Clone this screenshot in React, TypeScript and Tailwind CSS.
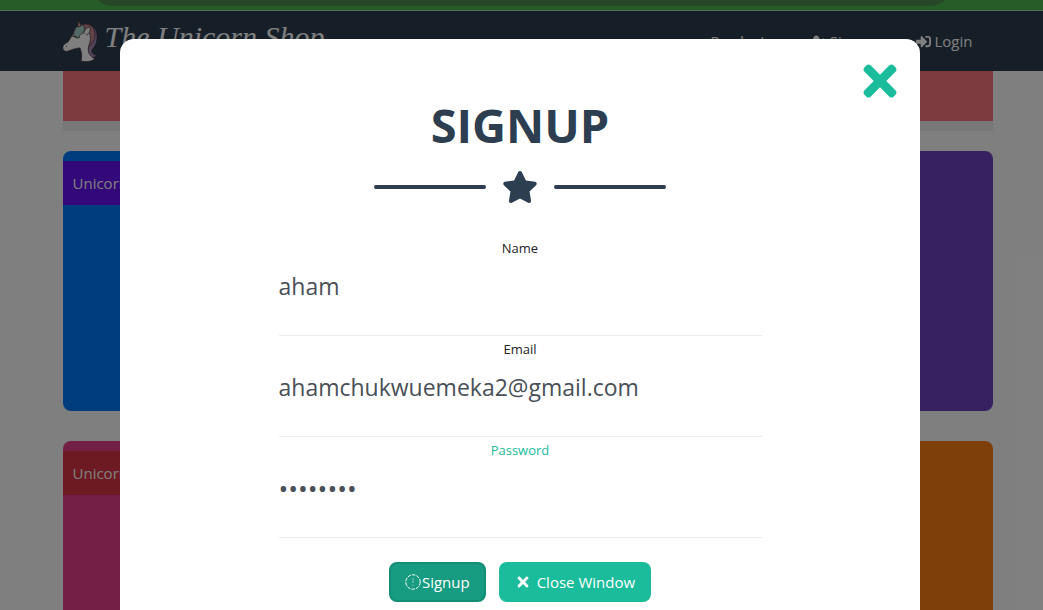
import { FaStar, FaTimes, FaSignInAlt, FaUserPlus } from "react-icons/fa";

function Unicorn() {
  return (
    <svg viewBox="0 0 36 42" className="h-[42px] w-9 shrink-0" aria-hidden="true" strokeLinejoin="round">
      <path d="M20 5C29 3 35 9 34 18c0 6-3 9-5 12-1 3 2 5 5 5-4 4-7 3-9 0L18 14z" fill="#a58bb5" stroke="#3b2a38" strokeWidth=".7" />
      <path d="M18 5c9-3 14 2 14 10 0 8-6 9-7 14-1 3 0 5 0 8-5-3-5-9-5-14z" fill="#c98893" stroke="#3b2a38" strokeWidth=".7" />
      <path d="M13 11C9 14 8 18 5 22c-4 2-6 4-5 7 1 3 4 3 8 1 3-1 6-2 9-2 2 5 2 9 1 13 5 1 9 1 14-2-6-3-8-8-6-14 2-5 2-10-1-14-4-4-8-3-12 0z" fill="#fff" stroke="#3b2a38" strokeWidth=".7" />
      <path d="M11 16c-1-4 1-9 5-11 4-1 7 2 5 6-1 3-5 3-5 7-2 0-4 0-5-2z" fill="#a6d3c8" stroke="#3b2a38" strokeWidth=".7" />
      <path d="M14.500 7 15.500 0l2.500 6z" fill="#dfa7a5" stroke="#3b2a38" strokeWidth=".7" />
      <path d="M21 14c0-4 3-7 6-7 1 4-1 7-4 8" fill="#fff" stroke="#3b2a38" strokeWidth=".7" />
      <path d="m9 16 5 1M3 26l1 1" fill="none" stroke="#3b2a38" strokeWidth=".8" />
    </svg>
  );
}

function DashedAlert() {
  return (
    <svg viewBox="0 0 16 16" className="size-4" fill="none" stroke="currentColor" aria-hidden="true">
      <circle cx="8" cy="8" r="7.2" strokeDasharray="3.6 1.05" strokeWidth="1" />
      <path d="M8 4v5M8 10.5v1.5" strokeWidth="1" opacity=".45" />
    </svg>
  );
}

function Product({ card, band }: { card: string; band: string }) {
  return (
    <article className={`h-[260px] rounded-lg pt-2.5 ${card}`}>
      {band && <h3 className={`px-2.5 py-2.5 text-[15px] leading-6 text-white ${band}`}>Unicorn</h3>}
    </article>
  );
}

type FieldProps = { id: string; label: string; type: string; value: string; tint?: string; size?: string };

function Field({ id, label, type, value, tint = "text-[#212529]", size = "text-[23px]" }: FieldProps) {
  return (
    <div className="flex h-[101px] flex-col border-b border-[#e9ecef]">
      <label htmlFor={id} className={`pt-1 text-center text-[13px] leading-[18px] ${tint}`}>{label}</label>
      <input id={id} type={type} defaultValue={value} className={`mt-[5px] h-12 w-full bg-transparent text-[#495057] outline-none ${size}`} />
    </div>
  );
}

export default function App() {
  return (
    <div className="relative h-screen overflow-hidden bg-white font-['Open_Sans','Noto_Sans',sans-serif]">
      <div className="h-2.5 overflow-hidden bg-[#4db950] px-[90px]">
        <div className="-mt-10 h-[46px] rounded-full bg-[#4c904f]" />
      </div>
      <header className="border-t border-[#a8dba9] bg-[#2c3e50] pl-3">
        <div className="mx-auto flex h-[60px] max-w-[930px] items-center text-white">
          <Unicorn />
          <span className="ml-1.5 pb-2 font-['Liberation_Serif',cursive] text-[30px] leading-10 whitespace-nowrap italic">The Unicorn Shop</span>
          <nav className="mr-5 ml-auto flex gap-[38px] text-[15px]">
            <a href="#products">Products</a>
            <a href="#signup" className="flex items-center gap-1"><FaUserPlus />Signup</a>
            <a href="#login" className="flex items-center gap-1"><FaSignInAlt />Login</a>
          </nav>
        </div>
      </header>
      <main className="pl-3">
        <div className="mx-auto max-w-[930px]">
          <div className="h-[60px] border-b-10 border-[#f0f0f0] bg-[#f8747e]" />
          <div className="mt-5 grid grid-cols-3 gap-[30px]">
            <Product card="bg-[#007bff]" band="bg-[#6610f2]" />
            <Product card="bg-[#28a745]" band="" />
            <Product card="bg-[#6f42c1]" band="" />
            <Product card="bg-[#e83e8c]" band="bg-[#dc3545]" />
            <Product card="bg-[#20c997]" band="" />
            <Product card="bg-[#fd7e14]" band="" />
          </div>
        </div>
      </main>

      <div className="absolute inset-0 overflow-hidden bg-black/50 pr-[3px]">
        <section role="dialog" aria-modal="true" aria-labelledby="signup-title" className="relative mx-auto mt-[39px] min-h-full max-w-[800px] rounded-[14px] bg-white px-6 pt-[58px]">
          <button type="button" aria-label="Close" className="absolute top-[18px] right-4 text-[48px] text-[#1abc9c]"><FaTimes /></button>
          <h2 id="signup-title" className="text-center text-[47px] leading-[56px] font-bold text-[#2c3e50]">SIGNUP</h2>
          <div className="mt-4 flex items-center justify-center gap-4 text-[#2c3e50]">
            <span className="h-1 w-28 rounded-full bg-[#2c3e50]" />
            <FaStar className="size-9" />
            <span className="h-1 w-28 rounded-full bg-[#2c3e50]" />
          </div>
          <form className="mx-auto mt-[30px] max-w-[483px]" onSubmit={(e) => e.preventDefault()}>
            <Field id="name" label="Name" type="text" value="aham" />
            <Field id="email" label="Email" type="email" value="ahamchukwuemeka2@gmail.com" />
            <Field id="password" label="Password" type="password" value="unicorns" tint="text-[#1abc9c]" size="text-[26px]" />
            <div className="mt-6 flex justify-center gap-[13px] text-[15px] text-white">
              <button type="submit" className="flex h-10 items-center gap-px rounded-lg border-2 border-[#148f77] bg-[#179b81] px-3.5"><DashedAlert />Signup</button>
              <button type="button" className="flex h-10 items-center gap-1.5 rounded-lg bg-[#1abc9c] px-4"><FaTimes className="size-4" />Close Window</button>
            </div>
          </form>
        </section>
      </div>
    </div>
  );
}
